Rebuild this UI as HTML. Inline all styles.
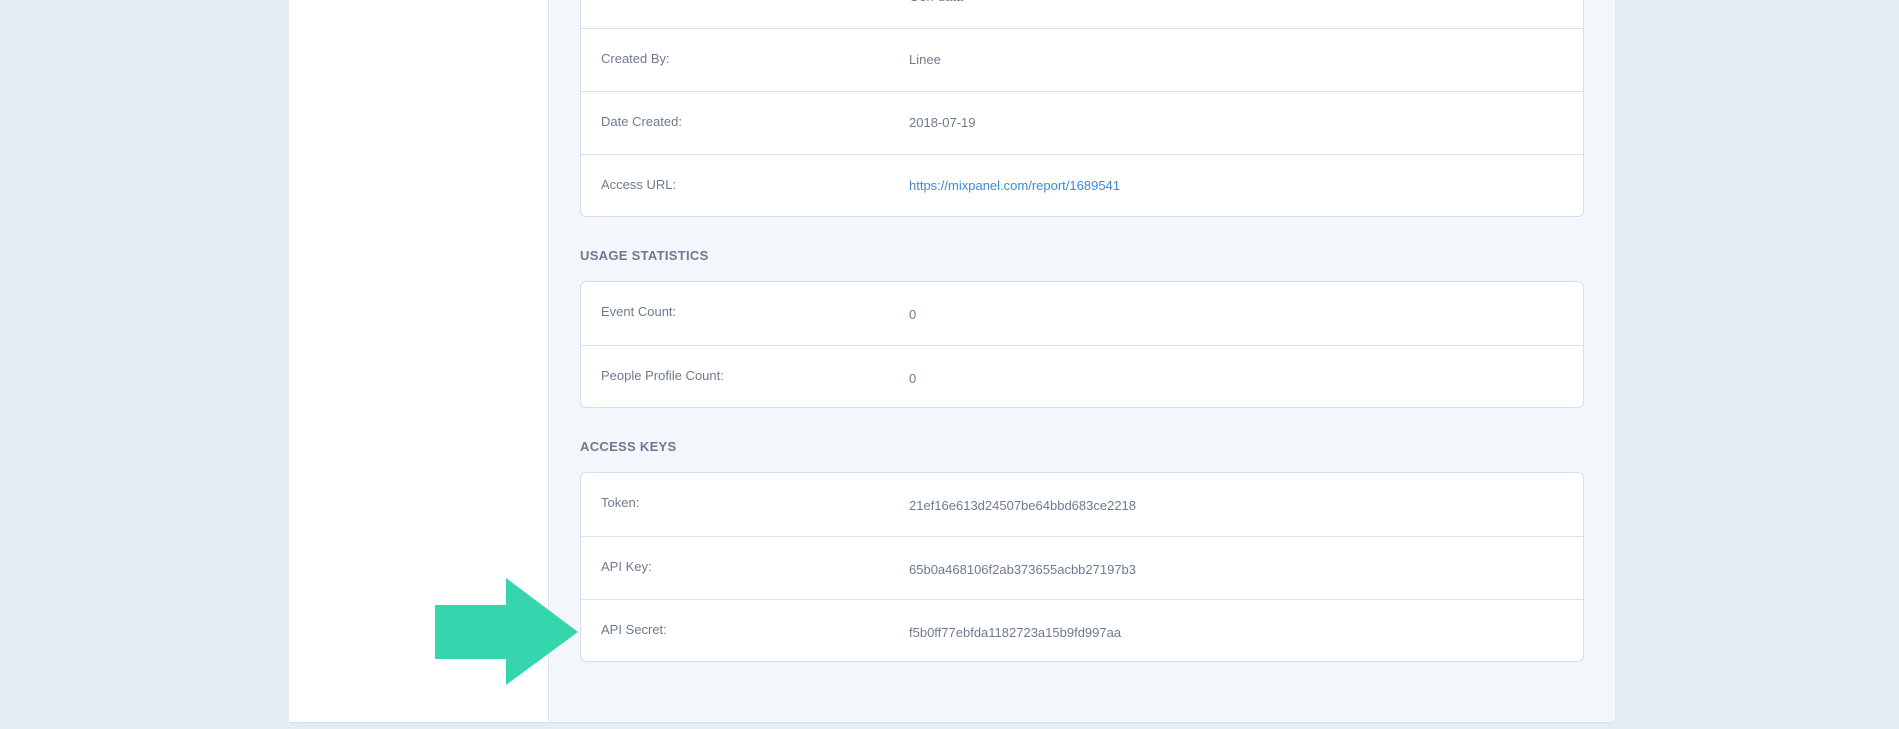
<!DOCTYPE html>
<html><head><style>
*{margin:0;padding:0;box-sizing:border-box}
body{width:1899px;height:729px;background:#e4ecf4;position:relative;overflow:hidden;font-family:"Liberation Sans",sans-serif;}
#panel{position:absolute;left:289px;top:-10px;width:1326px;height:732px;background:#f3f7fb;border-radius:0 0 3px 3px;box-shadow:0 1px 1px #d5dde6}
#side{position:absolute;left:289px;top:-10px;width:260px;height:732px;background:#fff;border-right:1px solid #dce3ea}
.card{position:absolute;left:580px;width:1004px;background:#fff;border:1px solid #d5dde6;border-radius:6px;overflow:hidden}
.row{height:63px;border-top:1px solid #d9e0e8;position:relative;font-size:13px;color:#6e7b8f}
.row:first-child{border-top:none}
.l{position:absolute;left:20px;top:22px}
.v{position:absolute;left:328px;top:25px}
.c1 .v{top:23px}
.h{position:absolute;left:580px;font-size:13px;font-weight:bold;color:#6b7a8f;letter-spacing:.3px}
a{color:#3b8ad9;text-decoration:none}
</style></head><body>
<div id="panel"></div>
<div id="side"></div>
<div class="card c1" style="top:-100px;height:317px;border-radius:0 0 6px 6px">
 <div class="row" style="height:127px"><span class="v" style="top:88px">Gen-data</span></div>
 <div class="row"><span class="l">Created By:</span><span class="v">Linee</span></div>
 <div class="row"><span class="l">Date Created:</span><span class="v">2018-07-19</span></div>
 <div class="row"><span class="l">Access URL:</span><span class="v"><a>https://mixpanel.com/report/1689541</a></span></div>
</div>
<div class="h" style="top:248px">USAGE STATISTICS</div>
<div class="card" style="top:281px;height:127px">
 <div class="row"><span class="l">Event Count:</span><span class="v">0</span></div>
 <div class="row"><span class="l">People Profile Count:</span><span class="v">0</span></div>
</div>
<div class="h" style="top:439px">ACCESS KEYS</div>
<div class="card" style="top:472px;height:190px">
 <div class="row"><span class="l">Token:</span><span class="v">21ef16e613d24507be64bbd683ce2218</span></div>
 <div class="row"><span class="l">API Key:</span><span class="v">65b0a468106f2ab373655acbb27197b3</span></div>
 <div class="row"><span class="l">API Secret:</span><span class="v">f5b0ff77ebfda1182723a15b9fd997aa</span></div>
</div>
<svg style="position:absolute;left:0;top:0" width="1899" height="729"><polygon points="435,605 506,605 506,578 578,632 506,685 506,659 435,659" fill="#35d6ad"/></svg>
</body></html>
